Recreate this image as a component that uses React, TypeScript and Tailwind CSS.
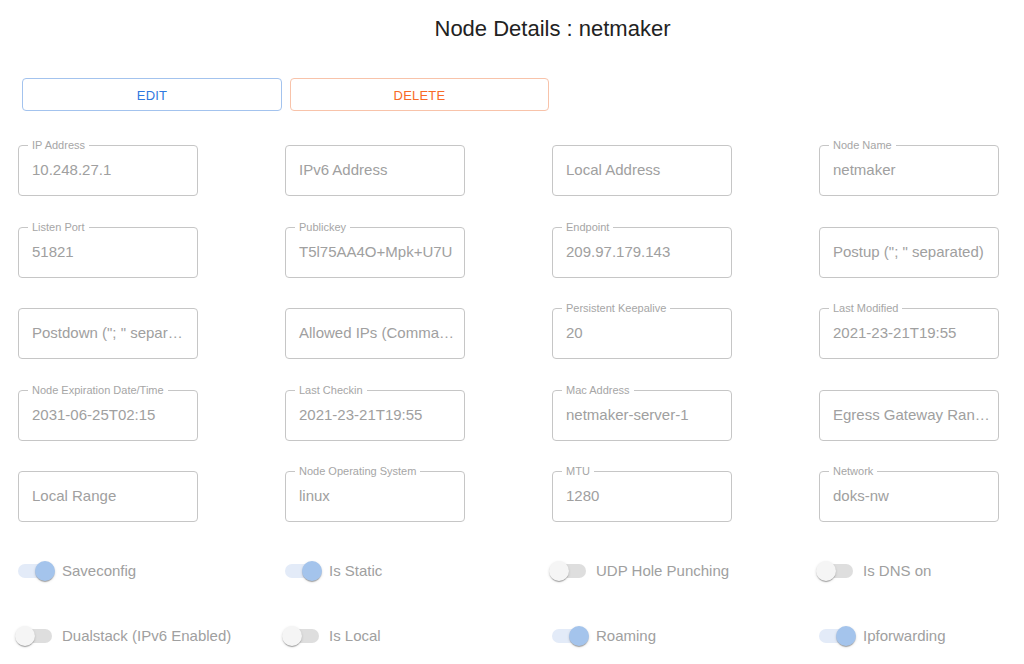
import React from "react";

type F = { label?: string; value: string; placeholder?: boolean };

const fields: F[] = [
  { label: "IP Address", value: "10.248.27.1" },
  { value: "IPv6 Address", placeholder: true },
  { value: "Local Address", placeholder: true },
  { label: "Node Name", value: "netmaker" },
  { label: "Listen Port", value: "51821" },
  { label: "Publickey", value: "T5l75AA4O+Mpk+U7U" },
  { label: "Endpoint", value: "209.97.179.143" },
  { value: 'Postup ("; " separated)', placeholder: true },
  { value: 'Postdown ("; " separ\u2026', placeholder: true },
  { value: "Allowed IPs (Comma\u2026", placeholder: true },
  { label: "Persistent Keepalive", value: "20" },
  { label: "Last Modified", value: "2021-23-21T19:55" },
  { label: "Node Expiration Date/Time", value: "2031-06-25T02:15" },
  { label: "Last Checkin", value: "2021-23-21T19:55" },
  { label: "Mac Address", value: "netmaker-server-1" },
  { value: "Egress Gateway Ran\u2026", placeholder: true },
  { value: "Local Range", placeholder: true },
  { label: "Node Operating System", value: "linux" },
  { label: "MTU", value: "1280" },
  { label: "Network", value: "doks-nw" },
];

const switches: { label: string; on: boolean }[] = [
  { label: "Saveconfig", on: true },
  { label: "Is Static", on: true },
  { label: "UDP Hole Punching", on: false },
  { label: "Is DNS on", on: false },
  { label: "Dualstack (IPv6 Enabled)", on: false },
  { label: "Is Local", on: false },
  { label: "Roaming", on: true },
  { label: "Ipforwarding", on: true },
];

function Field({ f }: { f: F }) {
  return (
    <div className="relative w-[180px] h-[51px] rounded-[4px] border border-[#c6c6c6] flex items-center pl-[13px] pb-[1px]">
      {f.label && (
        <span className="absolute left-[9px] top-[-7px] px-[4px] bg-white text-[11px] leading-[12px] text-[#a6a6a6] whitespace-nowrap">
          {f.label}
        </span>
      )}
      <span className="text-[15px] leading-[18px] text-[#a0a0a0] whitespace-nowrap">
        {f.value}
      </span>
    </div>
  );
}

function Switch({ on }: { on: boolean }) {
  return (
    <div className="relative w-[56px] h-[38px] shrink-0">
      <div
        className={
          on
            ? "absolute left-[12px] top-[12px] w-[34px] h-[14px] rounded-full bg-[#e3ebf8]"
            : "absolute left-[12px] top-[12px] w-[34px] h-[14px] rounded-full bg-[#dedede]"
        }
      />
      <div
        className={
          on
            ? "absolute left-[29px] top-[9px] w-[20px] h-[20px] rounded-full bg-[#a4c4ec] shadow-[0px_2px_1px_-1px_rgba(0,0,0,0.2),0px_1px_1px_0px_rgba(0,0,0,0.14),0px_1px_3px_0px_rgba(0,0,0,0.12)]"
            : "absolute left-[9px] top-[9px] w-[20px] h-[20px] rounded-full bg-[#f5f5f5] shadow-[0px_2px_1px_-1px_rgba(0,0,0,0.2),0px_1px_1px_0px_rgba(0,0,0,0.14),0px_1px_3px_0px_rgba(0,0,0,0.12)]"
        }
      />
    </div>
  );
}

export default function App() {
  return (
    <div
      className="w-[1024px] h-[664px] bg-white overflow-hidden"
      style={{ fontFamily: '"Liberation Sans", Arial, sans-serif' }}
    >
      <div className="flex justify-center pl-[81px] pt-[16px]">
        <h1 className="text-[22px] leading-[26px] text-[#222222] font-normal">
          Node Details : netmaker
        </h1>
      </div>
      <div className="flex gap-[8px] pl-[22px] mt-[36px]">
        <button className="w-[260px] h-[33px] rounded-[4px] border border-[#a3c3ee] text-[#2f78e0] text-[13px] tracking-[0.2px] flex items-center justify-center pt-[2px]">
          EDIT
        </button>
        <button className="w-[259px] h-[33px] rounded-[4px] border border-[#f8c3aa] text-[#f86a26] text-[13px] tracking-[0.2px] flex items-center justify-center pt-[2px]">
          DELETE
        </button>
      </div>
      <div className="grid grid-cols-[repeat(4,267px)] gap-y-[30.5px] pl-[18px] mt-[34px]">
        {fields.map((f, i) => (
          <Field key={i} f={f} />
        ))}
      </div>
      <div className="grid grid-cols-[repeat(4,267px)] gap-y-[27px] pl-[6px] mt-[30px]">
        {switches.map((s, i) => (
          <div key={i} className="flex items-center h-[38px]">
            <Switch on={s.on} />
            <span className="text-[15px] leading-[18px] text-[#a0a0a0] whitespace-nowrap">
              {s.label}
            </span>
          </div>
        ))}
      </div>
    </div>
  );
}
